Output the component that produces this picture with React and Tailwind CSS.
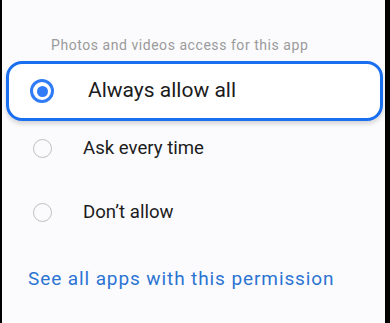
export default function App() {
  const font = { fontFamily: "Roboto, 'Noto Sans', sans-serif" };
  return (
    <div className="w-[390px] h-[323px] bg-black flex" style={font}>
      <div className="ml-[2px] w-[383px] h-full bg-[#fbfbfe] flex flex-col">
        <div className="pt-[36px] pl-[49px] text-[14px] leading-[18px] tracking-[0.55px] text-[#9a9a9a]">
          Photos and videos access for this app
        </div>
        <div className="mt-[7px] ml-[4px] mr-[2px] h-[60px] rounded-[16px] border-[3px] border-[#1a6ff0] bg-white shadow-[0_3px_4px_rgba(0,0,0,0.15)] flex items-center">
          <div className="ml-[21px] w-[24px] h-[24px] rounded-full border-[3px] border-[#2f7cf6] flex items-center justify-center">
            <div className="w-[11px] h-[11px] rounded-full bg-[#2f7cf6]" />
          </div>
          <span className="ml-[34px] text-[21px] text-[#1c1c1c]">Always allow all</span>
        </div>
        <div className="mt-[17px] h-[22px] flex items-center">
          <div className="ml-[31px] w-[19px] h-[19px] rounded-full border-[1.5px] border-[#c0c0c0] -mt-[2px]" />
          <span className="ml-[31px] text-[18.6px] text-[#1c1c1c]">Ask every time</span>
        </div>
        <div className="mt-[42px] h-[22px] flex items-center">
          <div className="ml-[31px] w-[19px] h-[19px] rounded-full border-[1.5px] border-[#c0c0c0] -mt-[2px]" />
          <span className="ml-[31px] text-[18.6px] text-[#1c1c1c]">Don’t allow</span>
        </div>
        <div className="mt-[41px] pl-[26px] text-[19px] tracking-[0.9px] text-[#2b74d2]">
          See all apps with this permission
        </div>
      </div>
    </div>
  );
}
